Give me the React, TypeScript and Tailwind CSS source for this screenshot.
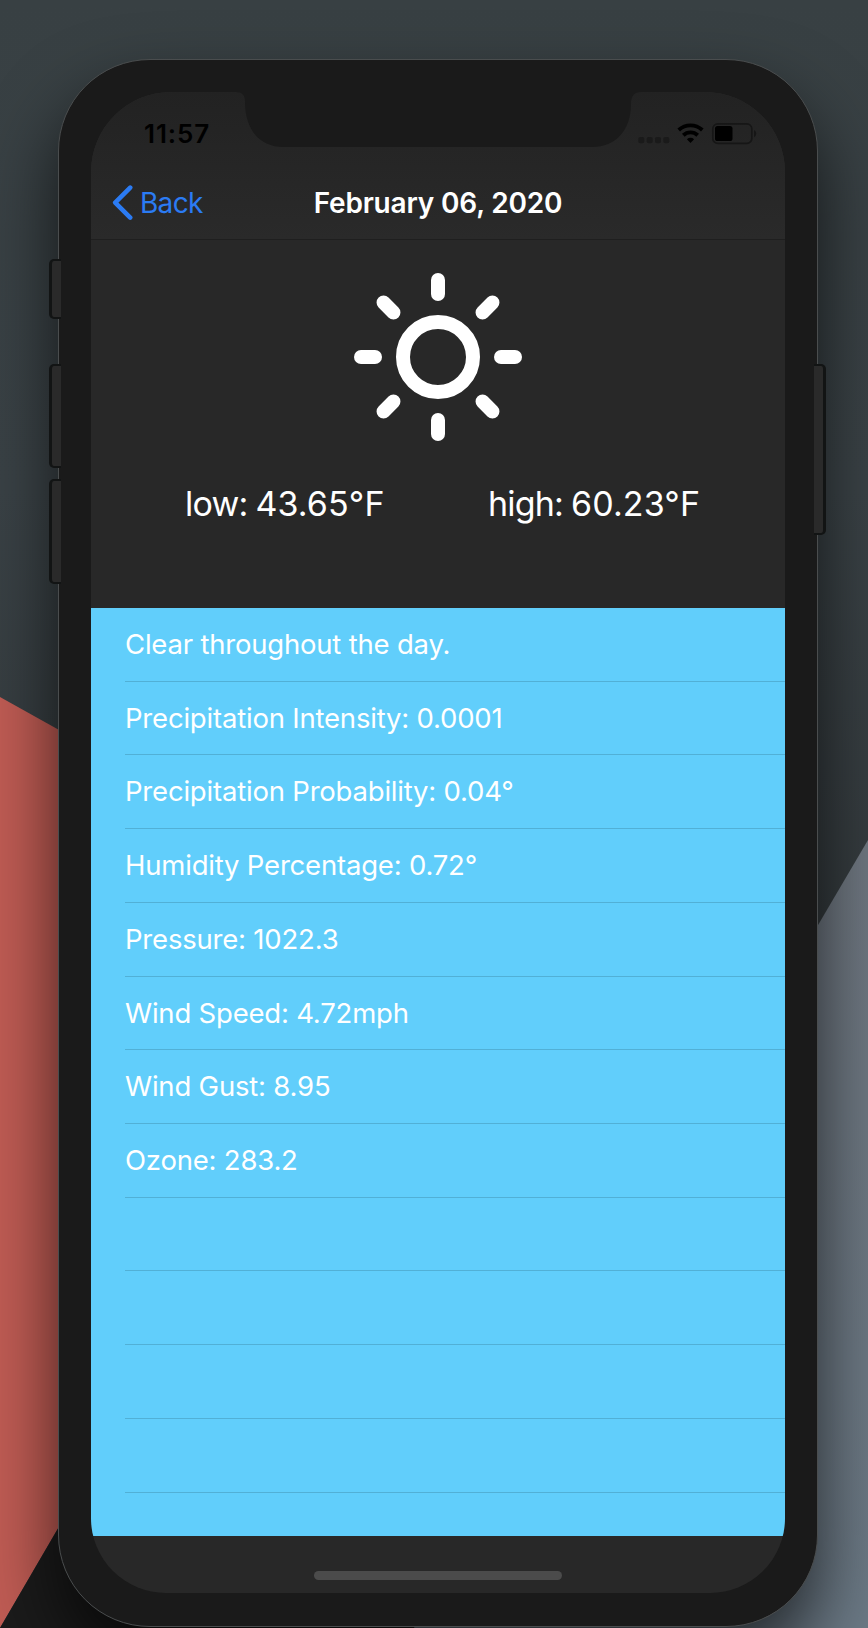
import React from "react";

const rows = [
  "Clear throughout the day.",
  "Precipitation Intensity: 0.0001",
  "Precipitation Probability: 0.04°",
  "Humidity Percentage: 0.72°",
  "Pressure: 1022.3",
  "Wind Speed: 4.72mph",
  "Wind Gust: 8.95",
  "Ozone: 283.2",
  "",
  "",
  "",
  "",
];

function Wallpaper() {
  return (
    <svg className="absolute inset-0" width="868" height="1628" viewBox="0 0 868 1628">
      <defs>
        <linearGradient id="slate" x1="0" y1="0" x2="0" y2="1">
          <stop offset="0" stopColor="#384043" />
          <stop offset="0.3" stopColor="#3a4246" />
          <stop offset="0.6" stopColor="#33393c" />
        </linearGradient>
        <linearGradient id="gray" x1="0" y1="0" x2="0" y2="1">
          <stop offset="0" stopColor="#6e767f" />
          <stop offset="1" stopColor="#6b7985" />
        </linearGradient>
      </defs>
      <rect width="868" height="1628" fill="url(#slate)" />
      <path d="M0 697 L120 764 L120 1422 L0 1628 Z" fill="#c05c54" />
      <path d="M0 1628 L120 1422 L434 1422 L434 1628 Z" fill="#1b1b1b" />
      <path d="M868 840 L700 1126 L414 1628 L868 1628 Z" fill="url(#gray)" />
    </svg>
  );
}

function Sun() {
  const angles = [0, 45, 90, 135, 180, 225, 270, 315];
  return (
    <svg width="168" height="168" viewBox="0 0 24 24" fill="none" stroke="white" strokeWidth="2" strokeLinecap="round">
      <circle cx="12" cy="12" r="5" />
      {angles.map((a) => (
        <path key={a} d="M12 1v2" transform={`rotate(${a} 12 12)`} />
      ))}
    </svg>
  );
}

function StatusBar() {
  return (
    <div className="flex h-[86px] justify-between pl-[53px] pr-[27px] pt-[26px]">
      <span className="h-8 text-[26px] font-semibold leading-8 tracking-[0.9px] text-black">11:57</span>
      <svg className="mt-[3px]" width="120" height="24" viewBox="638 121 120 24">
        <g fill="#1a1a1a">
          <rect x="638.3" y="137" width="6" height="6.3" rx="1.8" />
          <rect x="646.7" y="137" width="6" height="6.3" rx="1.8" />
          <rect x="655" y="137" width="6" height="6.3" rx="1.8" />
          <rect x="663.3" y="137" width="6" height="6.3" rx="1.8" />
        </g>
        <g fill="none" stroke="#000" strokeWidth="3.9">
          <path d="M678.7 130 A17.4 17.4 0 0 1 702.3 130" />
          <path d="M683.3 135.2 A10.6 10.6 0 0 1 697.7 135.2" />
        </g>
        <path d="M686.9 139.3 A5.2 5.2 0 0 1 694.1 139.3 L690.5 143 Z" />
        <rect x="712.8" y="123.8" width="39" height="19.6" rx="5" fill="none" stroke="#161616" strokeWidth="1.7" />
        <rect x="715" y="126" width="17.5" height="15" rx="2.6" />
        <path d="M754 130 a4 4 0 0 1 0 7.2 Z" fill="#161616" />
      </svg>
    </div>
  );
}

function Temperature({ label, value }: { label: string; value: string }) {
  return (
    <div className="flex gap-[8px]">
      <span className="tracking-[-0.8px]">{label}</span>
      <span className="tracking-[0.1px]">{value}</span>
    </div>
  );
}

export default function App() {
  return (
    <div className="relative h-[1628px] w-[868px] overflow-hidden bg-[#384043] font-['Inter','Liberation_Sans',sans-serif] text-white">
      <Wallpaper />
      <div className="relative px-[58px] pt-[59px]">
        <div className="relative h-[1568px] w-[760px] rounded-[92px] border border-[#4a4d4e] bg-[#1a1a1a] px-[32px] pt-[32px] shadow-[0_38px_72px_rgba(0,0,0,0.68)]">
          <div className="relative flex h-[1501px] flex-col overflow-hidden rounded-t-[80px] rounded-b-[75px] bg-[#282828]">
            <header className="h-[148px] border-b-1 border-[#1f1f1f] bg-linear-to-b from-[#222222] to-[#2a2a2a]">
              <StatusBar />
              <div className="flex h-[50px] items-center justify-between px-[21px] leading-[34px]">
                <div className="flex w-[180px] items-center text-[#2b7bf3]">
                  <svg width="22" height="36" viewBox="-0.6 0 22 36" fill="none" stroke="currentColor" strokeWidth="4.6" strokeLinecap="round" strokeLinejoin="round">
                    <path d="M17.6 2.6 L2.6 17.6 L17.6 32.6" />
                  </svg>
                  <span className="pl-[6px] text-[28px] tracking-[-0.7px]">Back</span>
                </div>
                <h1 className="whitespace-nowrap text-[28px] font-semibold tracking-[-0.18px]">February 06, 2020</h1>
                <span className="w-[180px]" />
              </div>
            </header>
            <section className="h-[368px] pt-[33px]">
              <div className="flex justify-center">
                <Sun />
              </div>
              <div className="mt-[42px] grid h-[42px] grid-cols-[303px_1fr] whitespace-nowrap pl-[94px] text-[34px] leading-[42px]">
                <Temperature label="low:" value="43.65°F" />
                <Temperature label="high:" value="60.23°F" />
              </div>
            </section>
            <ul className="h-[928px] bg-[#61cefb] pl-[34px]">
              {rows.map((text, i) => (
                <li key={i} className="h-[73.73px] border-b border-[#51b0d6] text-[27.5px] leading-[73.6px] tracking-[-0.2px]">
                  {text}
                </li>
              ))}
            </ul>
            <footer className="flex grow justify-center pt-[35px]">
              <div className="h-[9px] w-[248px] rounded-full bg-[#4b4b4b]" />
            </footer>
            <svg className="absolute left-[145px] top-0" width="406" height="56" viewBox="0 0 406 56" fill="#1a1a1a">
              <path d="M0 0 C6 0 9 3 9 10 C9 38 24 55 48 55 H356 C380 55 395 38 395 12 C395 4 398 0 405 0 Z" />
            </svg>
          </div>
        </div>
        <div className="absolute left-[49px] top-[259px] h-[60px] w-[12px] rounded-l-[5px] border-2 border-l-3 border-r-0 border-[#121414] bg-[#2a2a2a]" />
        <div className="absolute left-[49px] top-[364px] h-[104px] w-[12px] rounded-l-[5px] border-2 border-l-3 border-r-0 border-[#121414] bg-[#2a2a2a]" />
        <div className="absolute left-[49px] top-[479px] h-[105px] w-[12px] rounded-l-[5px] border-2 border-l-3 border-r-0 border-[#121414] bg-[#2a2a2a]" />
        <div className="absolute left-[814px] top-[364px] h-[171px] w-[12px] rounded-r-[5px] border-2 border-l-0 border-r-3 border-[#121414] bg-[#2a2a2a]" />
      </div>
    </div>
  );
}
